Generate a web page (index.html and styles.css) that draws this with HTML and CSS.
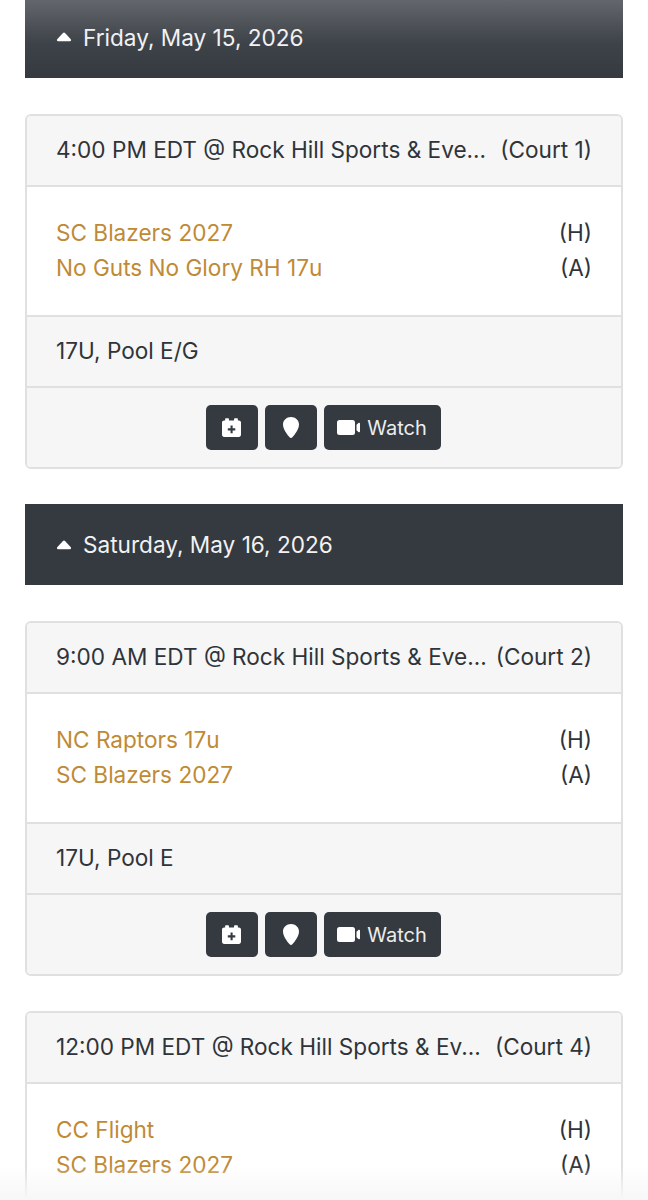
FILE: index.html
```html
<!DOCTYPE html>
<html lang="en">
<head>
    <meta charset="UTF-8">
    <meta name="viewport" content="width=device-width, initial-scale=1.0">
    <title>Schedule</title>
    <link rel="stylesheet" href="styles.css">
</head>
<body>
    <svg class="icon-defs" width="0" height="0" aria-hidden="true">
        <symbol id="i-caret" viewBox="0 0 16 10"><path d="M8 .6c.4 0 .7.2 1 .5l5.800 6.200c.6.700.2 1.900-.8 1.900H2C1 9.200.600 8 1.200 7.300L7 1.100C7.300.800 7.600.600 8 .600z"/></symbol>
        <symbol id="i-cal" viewBox="0 0 20 20"><path fill-rule="evenodd" d="M4 .3h2.600c.4 0 .7.300.7.700v1.500h5.400V1c0-.4.300-.7.700-.7H16c.4 0 .7.300.7.700v1.500h1.100c1.200 0 2.200 1 2.200 2.200v13c0 1.200-1 2.200-2.200 2.200H2.200C1 19.900 0 18.900 0 17.700v-13c0-1.200 1-2.200 2.200-2.200h1.100V1c0-.4.300-.7.700-.7zM9 8v2.900H6.100v2.200H9V16h2.200v-2.900h2.800v-2.200h-2.800V8H9z"/></symbol>
        <symbol id="i-pin" viewBox="0 0 16 21"><path d="M8 0c4.500 0 8 3.300 8 7.500 0 4.300-3.900 9.900-6.600 12.800-.8.900-2 .9-2.800 0C3.900 17.400 0 11.800 0 7.500 0 3.300 3.500 0 8 0z"/></symbol>
        <symbol id="i-cam" viewBox="0 0 23 15"><path d="M2.500 0h13A2.500 2.500 0 0 1 18 2.500v10a2.500 2.500 0 0 1-2.500 2.500h-13A2.500 2.500 0 0 1 0 12.500v-10A2.500 2.500 0 0 1 2.500 0zM19.500 4.800l1.900-1.900c.6-.5 1.600-.1 1.600.8v7.600c0 .9-1 1.300-1.600.8l-1.900-1.900V4.800z"/></symbol>
    </svg>

    <div class="day-bar day-bar-first">
        <svg class="caret"><use href="#i-caret"/></svg>
        <span>Friday, May 15, 2026</span>
    </div>

    <div class="game-card">
        <div class="card-row card-head">
            <span class="game-where">4:00 PM EDT @ Rock Hill Sports &amp; Eve...</span>
            <span>(Court 1)</span>
        </div>
        <div class="teams">
            <div class="team"><a href="#">SC Blazers 2027</a><span>(H)</span></div>
            <div class="team"><a href="#">No Guts No Glory RH 17u</a><span>(A)</span></div>
        </div>
        <div class="card-row card-pool">17U, Pool E/G</div>
        <div class="card-actions">
            <a class="btn btn-icon" href="#"><svg class="ic-cal"><use href="#i-cal"/></svg></a>
            <a class="btn btn-icon" href="#"><svg class="ic-pin"><use href="#i-pin"/></svg></a>
            <a class="btn btn-watch" href="#"><svg class="ic-cam"><use href="#i-cam"/></svg>Watch</a>
        </div>
    </div>

    <div class="day-bar">
        <svg class="caret"><use href="#i-caret"/></svg>
        <span>Saturday, May 16, 2026</span>
    </div>

    <div class="game-card">
        <div class="card-row card-head">
            <span class="game-where">9:00 AM EDT @ Rock Hill Sports &amp; Eve...</span>
            <span>(Court 2)</span>
        </div>
        <div class="teams">
            <div class="team"><a href="#">NC Raptors 17u</a><span>(H)</span></div>
            <div class="team"><a href="#">SC Blazers 2027</a><span>(A)</span></div>
        </div>
        <div class="card-row card-pool">17U, Pool E</div>
        <div class="card-actions">
            <a class="btn btn-icon" href="#"><svg class="ic-cal"><use href="#i-cal"/></svg></a>
            <a class="btn btn-icon" href="#"><svg class="ic-pin"><use href="#i-pin"/></svg></a>
            <a class="btn btn-watch" href="#"><svg class="ic-cam"><use href="#i-cam"/></svg>Watch</a>
        </div>
    </div>

    <div class="game-card">
        <div class="card-row card-head">
            <span class="game-where">12:00 PM EDT @ Rock Hill Sports &amp; Ev...</span>
            <span>(Court 4)</span>
        </div>
        <div class="teams">
            <div class="team"><a href="#">CC Flight</a><span>(H)</span></div>
            <div class="team"><a href="#">SC Blazers 2027</a><span>(A)</span></div>
        </div>
    </div>

    <div class="bottom-fade"></div>
</body>
</html>
```

FILE: styles.css
```css
* {
    margin: 0;
    padding: 0;
    box-sizing: border-box;
}

html, body {
    height: 1200px;
    overflow: hidden;
}

body {
    font-family: Inter, "Noto Sans", sans-serif;
    font-size: 22.6px;
    color: #2f343a;
    background: #fff;
    padding: 0 25px;
}

.icon-defs {
    display: block;
    height: 0;
}

.day-bar {
    display: flex;
    align-items: center;
    height: 81px;
    padding-left: 31px;
    background: #343a40;
    color: #f1f2f3;
    margin-bottom: 36px;
}

.day-bar-first {
    height: 78px;
    padding-bottom: 4px;
    background: linear-gradient(#63676c, #3e4349 55%, #343a40);
}

.caret {
    width: 16px;
    height: 10px;
    margin-right: 11px;
    fill: #fff;
}

.game-card {
    border: 2px solid #dfe0e1;
    border-radius: 6px;
    margin-bottom: 35px;
    overflow: hidden;
}

.card-row {
    padding: 0 29px;
    display: flex;
    align-items: center;
    background: #f6f6f6;
}

.card-head {
    height: 71px;
    padding-bottom: 3px;
    justify-content: space-between;
    border-bottom: 2px solid #dfe0e1;
}

.game-where {
    white-space: nowrap;
}

.teams {
    padding: 28px 29px 30px;
    line-height: 35px;
}

.team {
    display: flex;
    justify-content: space-between;
}

.team a {
    color: #bf8a36;
    text-decoration: none;
}

.card-pool {
    height: 73px;
    padding-bottom: 2px;
    border-top: 2px solid #dfe0e1;
    border-bottom: 2px solid #dfe0e1;
}

.card-actions {
    display: flex;
    justify-content: center;
    gap: 7px;
    height: 79px;
    padding: 17px 2px 0 0;
    background: #f6f6f6;
}

.btn {
    display: inline-flex;
    align-items: center;
    justify-content: center;
    height: 45px;
    border-radius: 5px;
    background: #343a40;
    color: #eceded;
    fill: #fff;
    font-size: 20px;
    text-decoration: none;
}

.btn-icon {
    width: 52px;
}

.btn-watch {
    width: 117px;
    gap: 7px;
}

.ic-cal {
    width: 19px;
    height: 19px;
}

.ic-pin {
    width: 16px;
    height: 21px;
}

.ic-cam {
    width: 23px;
    height: 15px;
}

/* faded strip at the bottom of the screen */
.bottom-fade {
    position: fixed;
    left: 0;
    right: 0;
    bottom: 0;
    height: 34px;
    background: linear-gradient(rgba(247, 247, 247, 0), #f7f7f7);
}
```
